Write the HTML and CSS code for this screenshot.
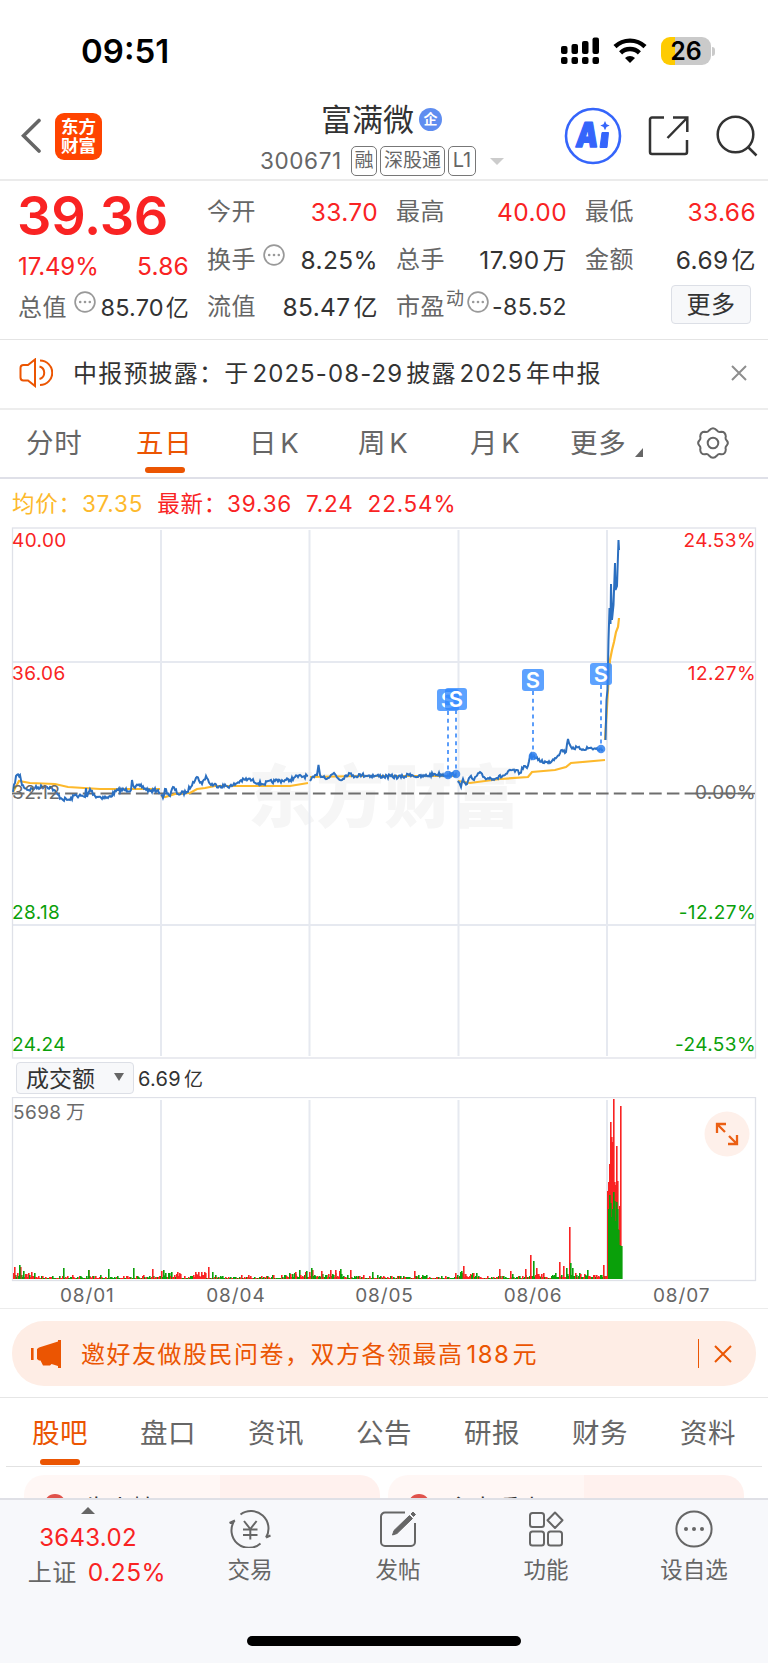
FILE: index.html
```html
<!DOCTYPE html>
<html lang="zh-CN">
<head>
    <meta charset="UTF-8">
    <meta name="viewport" content="width=device-width, initial-scale=1.0">
    <title>富满微 300671</title>
    <link rel="stylesheet" href="styles.css">
</head>
<body>

<div class="statusbar">
    <span class="clock">09:51</span>
    <div class="status-icons">
        <svg class="signal" width="39" height="28" viewBox="0 0 39 28">
            <rect x="0" y="9" width="6.500" height="8" rx="2"/>
            <rect x="10.500" y="7" width="6.500" height="10" rx="2"/>
            <rect x="21" y="4" width="6.500" height="13" rx="2"/>
            <rect x="31.500" y="0.500" width="6.500" height="16.500" rx="2"/>
            <rect x="0" y="20" width="6.500" height="7" rx="2"/>
            <rect x="10.500" y="20" width="6.500" height="7" rx="2"/>
            <rect x="21" y="20" width="6.500" height="7" rx="2"/>
            <rect x="31.500" y="20" width="6.500" height="7" rx="2"/>
        </svg>
        <svg class="wifi" width="34" height="26" viewBox="0 0 34 26">
            <path d="M2 8.700a21.500 21.500 0 0 1 30 0" fill="none" stroke="#000" stroke-width="4.400"/>
            <path d="M7.600 14.800a13.500 13.500 0 0 1 18.800 0" fill="none" stroke="#000" stroke-width="4.400"/>
            <path d="M17 25l-5-5a7.200 7.200 0 0 1 10 0z"/>
        </svg>
        <div class="battery"><span>26</span></div>
        <div class="battery-tip"></div>
    </div>
</div>

<header class="header">
    <div class="header-left">
        <svg width="20" height="36" viewBox="0 0 20 36"><path d="M18 2.500L2.500 17.800L18 33" fill="none" stroke="#666" stroke-width="3.600" stroke-linecap="round"/></svg>
        <div class="logo">东方<br>财富</div>
    </div>
    <div class="header-title">
        <div class="name">富满微<span class="corp">企</span></div>
        <div class="code"><span class="num">300671</span><i>融</i><i class="wide">深股通</i><i>L1</i><b class="caret"></b></div>
    </div>
    <div class="header-right">
        <svg width="58" height="58" viewBox="0 0 58 58">
            <circle cx="29" cy="29" r="27" fill="none" stroke="#3565fb" stroke-width="2.600"/>
            <text class="ai" transform="translate(11 40) skewX(-6) scale(.82 1)">A</text>
            <path d="M38 25.500h6.500l-1.500 15h-7z" fill="#3565fb" stroke="#3565fb" stroke-linejoin="round"/>
            <path d="M41 14l1.500 3.200l3.200 1.300l-3.200 1.500l-1.500 3.200l-1.500-3.200l-3.200-1.500l3.200-1.300z" fill="#3565fb"/>
        </svg>
        <svg width="42" height="42" viewBox="0 0 42 42" fill="none" stroke="#333" stroke-width="2.500">
            <path d="M16 2.500H4a2 2 0 0 0-2 2V37a2 2 0 0 0 2 2H37a2 2 0 0 0 2-2V25M25 2.500H39.300V17M39 3L19.500 23"/>
        </svg>
        <svg width="42" height="42" viewBox="0 0 42 42" fill="none" stroke="#333" stroke-width="2.500">
            <circle cx="19.500" cy="19.500" r="17.800"/><path d="M32 32l8.500 8.500"/>
        </svg>
    </div>
</header>

<section class="quote">
    <div class="q-price">
        <div class="price">39.36</div>
        <div class="row red"><span>17.49%</span><span class="v">5.86</span></div>
        <div class="row"><label>总值</label><svg class="dots" viewBox="0 0 22 22"><use href="#dots"/></svg><span class="v">85.70<em>亿</em></span></div>
    </div>
    <div class="q-col c2">
        <div class="row"><label>今开</label><span class="v red">33.70</span></div>
        <div class="row"><label>换手</label><svg class="dots" viewBox="0 0 22 22"><use href="#dots"/></svg><span class="v">8.25%</span></div>
        <div class="row"><label>流值</label><span class="v">85.47<em>亿</em></span></div>
    </div>
    <div class="q-col c3">
        <div class="row"><label>最高</label><span class="v red">40.00</span></div>
        <div class="row"><label>总手</label><span class="v">17.90<em>万</em></span></div>
        <div class="row"><label>市盈<sup>动</sup></label><svg class="dots tight" viewBox="0 0 22 22"><use href="#dots"/></svg><span class="v small">-85.52</span></div>
    </div>
    <div class="q-col c4">
        <div class="row"><label>最低</label><span class="v red">33.66</span></div>
        <div class="row"><label>金额</label><span class="v">6.69<em>亿</em></span></div>
        <div class="row"><button class="more">更多</button></div>
    </div>
</section>

<section class="notice">
    <svg width="34" height="30" viewBox="0 0 34 30" fill="none" stroke="#eb5502" stroke-width="2">
        <path d="M16 1.500V28L9 22.500H4.500a3 3 0 0 1-3-3V10a3 3 0 0 1 3-3H9z"/>
        <path d="M20.500 8.500a6.500 6.500 0 0 1 0 12.500M21 2.500a12 12 0 0 1 0 24.500"/>
    </svg>
    <p>中报预披露：<span class="gap">于</span><span class="num">2025-08-29</span>披露<span class="num">2025</span>年中报</p>
    <svg class="close" width="16" height="16" viewBox="0 0 16 16"><path d="M1 1l14 14M15 1L1 15" stroke="#8e8e8e" stroke-width="2"/></svg>
</section>

<nav class="periods">
    <a>分时</a>
    <a class="on">五日</a>
    <a>日<span>K</span></a>
    <a>周<span>K</span></a>
    <a>月<span>K</span></a>
    <a class="drop">更多</a>
    <svg width="32" height="32" viewBox="0 0 32 32" fill="none" stroke="#666" stroke-width="2">
        <path d="M12 3.500Q16 -1 20 3.500Q21.500 5.500 24 4.700Q28.500 4.500 28.800 9.500Q28 12 29.700 13.500Q32 16 29.700 18.500Q28 20 28.800 22.500Q28.500 27.500 24 27.300Q21.500 26.500 20 28.500Q16 33 12 28.500Q10.500 26.500 8 27.300Q3.500 27.500 3.200 22.500Q4 20 2.300 18.500Q0 16 2.300 13.500Q4 12 3.200 9.500Q3.500 4.500 8 4.700Q10.500 5.500 12 3.500Z"/>
        <circle cx="16" cy="16" r="5.300"/>
    </svg>
</nav>

<div class="legend">
    <span class="avg">均价：37.35</span>
    <span class="last">最新：39.36</span>
    <span>7.24</span>
    <span>22.54%</span>
</div>

<svg class="price-chart" width="768" height="532" viewBox="0 527 768 532">
    <text class="watermark" x="248" y="822">东方财富</text>
    <g class="grid">
        <path d="M161 530V1056M309.500 530V1056M458.500 530V1056M607 530V1056M12 662H755M12 925H755"/>
        <rect class="frame" x="12.500" y="528" width="743" height="530"/>
    </g>
    <path d="M12 793.500H755" stroke="#6e6e6e" stroke-width="2.200" stroke-dasharray="12.500 5.200"/>
    <path d="M695 793.500H755" stroke="#6e6e6e" stroke-width="1.600"/>
    <g id="lines"></g>
    <g id="marks"></g>
    <g class="axis">
        <text class="up" x="12" y="547">40.00</text>
        <text class="up" x="12" y="680">36.06</text>
        <text x="12" y="799">32.12</text>
        <text class="down" x="12" y="919">28.18</text>
        <text class="down" x="12" y="1051">24.24</text>
        <g text-anchor="end">
            <text class="up" x="756" y="547">24.53%</text>
            <text class="up" x="756" y="680">12.27%</text>
            <text x="756" y="799">0.00%</text>
            <text class="down" x="756" y="919">-12.27%</text>
            <text class="down" x="756" y="1051">-24.53%</text>
        </g>
    </g>
</svg>

<div class="indicator">
    <div class="select">成交额<b></b></div>
    <span class="num">6.69<em>亿</em></span>
</div>

<div class="volume">
    <svg width="768" height="185" viewBox="0 1097 768 185">
        <g class="grid">
            <path d="M161 1100V1279M309.500 1100V1279M458.500 1100V1279M607 1100V1279"/>
            <rect class="frame" x="12.500" y="1097.500" width="743" height="183"/>
        </g>
        <g id="bars"></g>
        <g class="axis"><text x="13" y="1119">5698</text><text x="66" y="1119">万</text></g>
        <circle cx="727" cy="1134" r="22.500" fill="#fef0ea"/>
        <path d="M725 1132l-7.500-7.500M717 1133v-9h9M729 1136l8 8M728 1144h9v-9" fill="none" stroke="#eb5f14" stroke-width="2.300"/>
    </svg>
    <div class="dates"><span>08/01</span><span>08/04</span><span>08/05</span><span>08/06</span><span>08/07</span></div>
</div>

<div class="banner-wrap">
    <div class="banner">
        <svg width="32" height="28" viewBox="0 0 32 28" fill="#eb5502">
            <rect x="0" y="8" width="2.600" height="12"/>
            <path d="M6 9l2-1.500L27 1.500V0h3v28h-3v-2L20.500 24l-1.500 1.500h-7L9.500 20.500H8L6 19z"/>
        </svg>
        <p>邀好友做股民问卷，双方各领最高<span class="num">188</span>元</p>
        <i></i>
        <svg width="18" height="18" viewBox="0 0 18 18"><path d="M1 1l16 16M17 1L1 17" stroke="#eb5502" stroke-width="2"/></svg>
    </div>
</div>

<nav class="subtabs">
    <a class="on">股吧</a><a>盘口</a><a>资讯</a><a>公告</a><a>研报</a><a>财务</a><a>资料</a>
</nav>

<section class="feed">
    <div class="card"><b></b><span>牛人榜</span></div>
    <div class="card"><b></b><span>主力看点</span></div>
</section>

<footer class="tabbar">
    <div class="index">
        <b></b>
        <strong>3643.02</strong>
        <p>上证<span>0.25%</span></p>
    </div>
    <div class="tab">
        <svg width="42" height="38" viewBox="0 0 42 38" fill="none" stroke="#666" stroke-width="2">
            <path d="M11.500 4.500A17.500 17.500 0 0 1 37 27.500M31.500 33.500A17.500 17.500 0 0 1 5.500 10.500M0.500 13l5.500-2.500M41.500 25.500L37 27.500"/>
            <path d="M15 11l6.300 8l6.300-8M21.300 19v10.500M14 19.500h14.500M14 25h14.500"/>
        </svg>
        交易
    </div>
    <div class="tab">
        <svg width="38" height="38" viewBox="0 0 38 38" fill="none" stroke="#666" stroke-width="2">
            <path d="M26 2.500H6a4 4 0 0 0-4 4V32a4 4 0 0 0 4 4H32a4 4 0 0 0 4-4V13"/>
            <path d="M30.500 5.500l3 3L18 23.500l-4.500 1.500l1.500-4.500zM32 4l2-2l2.500 2.500l-2 2z" fill="#666" stroke-width="1"/>
        </svg>
        发帖
    </div>
    <div class="tab">
        <svg width="36" height="38" viewBox="0 0 36 38" fill="none" stroke="#666" stroke-width="2">
            <rect x="2" y="3" width="14" height="14" rx="2.500"/>
            <rect x="2" y="21.500" width="14" height="14" rx="2.500"/>
            <rect x="20" y="21.500" width="14" height="14" rx="2.500"/>
            <path d="M27 2.500l7.500 7.800L27 18l-7.500-7.700z" stroke-linejoin="round"/>
        </svg>
        功能
    </div>
    <div class="tab">
        <svg width="38" height="38" viewBox="0 0 38 38">
            <circle cx="19" cy="19" r="17.600" fill="none" stroke="#666" stroke-width="2"/>
            <circle cx="11" cy="19" r="2" fill="#666"/><circle cx="19" cy="19" r="2" fill="#666"/><circle cx="27" cy="19" r="2" fill="#666"/>
        </svg>
        设自选
    </div>
    <div class="home"></div>
</footer>

<svg width="0" height="0" class="defs">
    <g id="dots">
        <circle cx="11" cy="11" r="9.900" fill="none" stroke="#999" stroke-width="1.700"/>
        <circle cx="6.200" cy="11" r="1.300" fill="#999"/><circle cx="11" cy="11" r="1.300" fill="#999"/><circle cx="15.800" cy="11" r="1.300" fill="#999"/>
    </g>
</svg>

<script src="chart.js"></script>
</body>
</html>
```
FILE: styles.css
```css
* {
    box-sizing: border-box;
}
body {
    margin: 0;
    width: 768px;
    height: 1663px;
    overflow: hidden;
    display: flex;
    flex-direction: column;
    background: #fff;
    color: #333;
    font-family: Inter, "Noto Sans CJK SC", sans-serif;
    font-size: 24px;
}
p {
    margin: 0;
}
i, em {
    font-style: normal;
}
.red {
    color: #f92323;
}
.defs {
    position: absolute;
}

/* status bar */
.statusbar {
    height: 92px;
    flex: none;
    display: flex;
    justify-content: space-between;
    padding: 31px 53px 0 81px;
}
.clock {
    font-size: 33px;
    line-height: 40px;
    font-weight: 600;
    color: #000;
}
.status-icons {
    display: flex;
    align-items: flex-start;
    padding-top: 6px;
}
.wifi {
    margin: 1px 0 0 13px;
}
.battery {
    margin-left: 14px;
    width: 50px;
    height: 28px;
    border-radius: 9px;
    background: linear-gradient(90deg, #fecb02 14px, #cacaca 14px);
    color: #000;
    font-weight: 600;
    font-size: 25px;
    line-height: 28px;
    text-align: center;
}
.battery-tip {
    width: 3px;
    height: 9px;
    margin: 10px 0 0 1px;
    border-radius: 0 4px 4px 0;
    background: #cacaca;
}

/* header */
.header {
    height: 89px;
    flex: none;
    display: grid;
    grid-template-columns: 250px 260px 1fr;
    border-bottom: 2px solid #ebebeb;
}
.header-left {
    display: flex;
    align-items: center;
    padding: 1px 0 0 21px;
}
.logo {
    width: 47px;
    height: 47px;
    margin-left: 14px;
    border-radius: 9px;
    background: #ff4400;
    color: #fff;
    font-weight: 700;
    font-size: 17.500px;
    line-height: 19px;
    padding-top: 4px;
    text-align: center;
}
.header-title {
    display: flex;
    flex-direction: column;
}
.name {
    display: flex;
    align-items: center;
    height: 56px;
    padding-left: 71px;
    font-size: 31px;
    line-height: 54px;
}
.corp {
    width: 23px;
    height: 23px;
    margin: -2px 0 0 5px;
    border-radius: 50%;
    background: #5f8df0;
    color: #fff;
    font-size: 14px;
    line-height: 22px;
    font-weight: 700;
    text-align: center;
}
.code {
    display: flex;
    align-items: center;
    margin-top: -2px;
    padding-left: 10px;
    color: #666;
    font-size: 22.500px;
    line-height: 30px;
}
.code .num {
    width: 91px;
    letter-spacing: .6px;
}
.code i {
    height: 30px;
    width: 26px;
    margin-right: 3px;
    border: 1px solid #777;
    border-radius: 5px;
    font-size: 19px;
    line-height: 27px;
    text-align: center;
    flex: none;
}
.code i:nth-of-type(3) {
    width: 28px;
    font-size: 20px;
}
.code .wide {
    width: 65px;
}
.caret {
    margin-left: 11px;
    border: 7px solid transparent;
    border-top-color: #ccc;
    border-bottom: 0;
}
.header-right {
    display: flex;
    align-items: center;
    padding: 1px 0 0 54px;
}
.header-right svg + svg {
    margin-left: 26px;
}
.ai {
    font-size: 34px;
    font-weight: 900;
    fill: #3565fb;
    stroke: #3565fb;
    stroke-width: 1.500;
    stroke-linejoin: round;
}

/* quote */
.quote {
    height: 159px;
    flex: none;
    display: grid;
    grid-template-columns: 170px 170px 170px 170px;
    column-gap: 19px;
    padding: 7px 12px 0 18px;
    border-bottom: 1px solid #e4e4e4;
}
.row {
    display: flex;
    height: 47.500px;
    line-height: 48px;
}
.row label {
    color: #666;
    letter-spacing: .5px;
    white-space: nowrap;
}
.row .v {
    margin-left: auto;
    margin-right: -1px;
    white-space: nowrap;
    font-size: 24.500px;
    letter-spacing: .4px;
}
.row em {
    margin-left: 3px;
    font-size: 24px;
}
.row sup {
    font-size: 18px;
    line-height: 0;
    vertical-align: 10px;
    margin-left: 1px;
}
.price {
    height: 54px;
    font-size: 54px;
    line-height: 55px;
    font-weight: 600;
    letter-spacing: -.2px;
    margin-left: -1px;
    color: #f92323;
}
.q-price .row {
    height: 41px;
    line-height: 49px;
    font-size: 24px;
}
.q-price .row + .row {
    line-height: 50px;
}
.q-price .row span {
    font-size: 24px;
    letter-spacing: -.1px;
}
.q-price .row .v {
    font-size: 23.500px;
    letter-spacing: .2px;
}
.q-price .red .v {
    font-size: 24.500px;
}
.q-price .row .v em {
    margin-left: 2px;
    font-size: 23px;
}
.dots {
    width: 22px;
    height: 22px;
    margin: 8px 0 0 7px;
    flex: none;
}
.dots.tight {
    margin-left: 2px;
}
.row .small {
    font-size: 23px;
}
.more {
    margin: 2px 4px 0 auto;
    width: 80px;
    height: 39px;
    border: 1px solid #dcdfe6;
    border-radius: 4px;
    background: #f7f8fa;
    color: #333;
    font: inherit;
    line-height: 36px;
    letter-spacing: .5px;
    padding: 0;
}

/* notice */
.notice {
    height: 70px;
    flex: none;
    display: flex;
    align-items: center;
    padding: 0 21px 2px 19px;
    border-bottom: 2px solid #ededed;
}
.notice p {
    margin: -3px 0 0 20px;
    letter-spacing: 1.200px;
}
.notice .num {
    margin: 0 3px;
    letter-spacing: 1.100px;
}
.notice .close {
    margin-left: auto;
}

/* chart period tabs */
.periods {
    height: 69px;
    flex: none;
    display: flex;
    align-items: center;
    padding: 0 0 2px 26px;
    border-bottom: 2px solid #dfe0e8;
    font-size: 27.500px;
    color: #666;
}
.periods a {
    width: 110px;
    line-height: 67px;
    height: 65px;
    letter-spacing: .7px;
}
.periods a span {
    margin-left: 3px;
}
.periods a:nth-child(3) {
    padding-left: 3px;
}
.periods a:nth-child(4) {
    padding-left: 2px;
}
.periods a:nth-child(5) {
    padding-left: 4px;
}
.periods .on, .subtabs .on {
    color: #eb5502;
    position: relative;
}
.periods .on::after, .subtabs .on::after {
    content: "";
    position: absolute;
    left: 9px;
    bottom: 2px;
    width: 40px;
    height: 6px;
    border-radius: 3px;
    background: #eb5502;
}
.periods .drop::after {
    content: "";
    display: inline-block;
    margin-left: 9px;
    border-left: 8px solid transparent;
    border-bottom: 9px solid #666;
    vertical-align: -4px;
}
.periods .drop {
    width: 127px;
    margin-left: -6px;
}

.legend {
    height: 48px;
    flex: none;
    display: flex;
    gap: 14px;
    padding-left: 12px;
    font-size: 22.500px;
    line-height: 49px;
    letter-spacing: .8px;
    color: #f92323;
}
.legend .avg {
    color: #fdb92c;
}

/* charts */
.price-chart {
    display: block;
    flex: none;
}
.grid path {
    stroke: #e6e9f0;
    stroke-width: 2;
    fill: none;
}
.grid .frame {
    fill: none;
    stroke: #dfe1e8;
    stroke-width: 1.300;
}
.watermark {
    font-size: 68px;
    font-weight: 900;
    fill: #f6f6f6;
}
.axis text {
    font-size: 19px;
    letter-spacing: .4px;
    fill: #6a6a6a;
}
.axis .up {
    fill: #f92323;
}
.axis .down {
    fill: #0aa00a;
}
.mark-s {
    font-size: 22px;
    font-weight: 600;
    fill: #fff;
    text-anchor: middle;
}
.indicator {
    height: 38px;
    flex: none;
    display: flex;
    align-items: center;
    padding-left: 16px;
}
.select {
    width: 118px;
    height: 32px;
    display: flex;
    align-items: center;
    padding: 0 0 2px 9px;
    border: 1px solid #dcdfe6;
    border-radius: 4px;
    background: #f7f8fa;
    font-size: 23px;
}
.select b {
    margin-left: 19px;
    border: 5px solid transparent;
    border-top: 8px solid #666;
    border-bottom: 0;
}
.indicator .num {
    margin: -1px 0 0 4px;
    font-size: 20px;
    letter-spacing: .3px;
}
.indicator em {
    margin-left: 3px;
    font-size: 19px;
}
.volume {
    height: 212px;
    flex: none;
    border-bottom: 1px solid #ececec;
}
.volume > svg {
    display: block;
}
.dates {
    display: grid;
    grid-template-columns: repeat(5, 148.600px);
    padding-left: 13px;
    font-size: 19px;
    line-height: 28px;
    letter-spacing: .9px;
    color: #666;
    text-align: center;
}

/* invite banner */
.banner-wrap {
    height: 89px;
    flex: none;
    padding: 12px 12px 0;
    border-bottom: 1px solid #e6e6e6;
}
.banner {
    height: 65px;
    display: flex;
    align-items: center;
    padding: 0 24px 0 19px;
    border-radius: 32px;
    background: #feede5;
    color: #eb5502;
}
.banner p {
    margin: -2px 0 0 18px;
    font-size: 24px;
    letter-spacing: 1.500px;
}
.banner .num {
    margin: 0 2px 0 3px;
}
.banner i {
    width: 1.500px;
    height: 29px;
    margin: 0 15px 0 auto;
    background: #eb5502;
}

/* forum tabs */
.subtabs {
    height: 69px;
    flex: none;
    display: grid;
    grid-template-columns: repeat(7, 1fr);
    margin: 0 6px;
    border-bottom: 1px solid #e2e2e2;
    font-size: 27.500px;
    line-height: 71px;
    letter-spacing: .5px;
    color: #666;
    text-align: center;
}
.subtabs .on::after {
    left: 34px;
    bottom: 4px;
}
.feed {
    flex: 1;
    min-height: 0;
    overflow: hidden;
    display: grid;
    grid-template-columns: 356px 356px;
    gap: 8px;
    padding: 8px 24px 0;
}
.card {
    height: 90px;
    display: flex;
    align-items: flex-start;
    padding: 19px 0 0 20px;
    border-radius: 20px;
    background: linear-gradient(90deg, #fff7f5 55%, #fff1ee 55%);
}
.card b {
    width: 22px;
    height: 22px;
    border-radius: 50%;
    background: #e0524b;
}
.card span {
    margin-left: 18px;
    font-size: 24px;
    line-height: 30px;
}

/* bottom bar */
.tabbar {
    height: 165px;
    flex: none;
    display: grid;
    grid-template-columns: 176px repeat(4, 148px);
    border-top: 2px solid #dfe0e6;
    background: #f7f8fb;
    color: #666;
    position: relative;
}
.index {
    display: flex;
    flex-direction: column;
    align-items: center;
    padding-top: 7px;
}
.index b {
    border: 7px solid transparent;
    border-bottom-color: #666;
    border-top: 0;
}
.index strong {
    font-weight: 400;
    color: #f92323;
    margin-top: 8px;
    line-height: 32px;
    letter-spacing: .3px;
}
.index p {
    padding-left: 18px;
    line-height: 36px;
    letter-spacing: .5px;
}
.index p span {
    margin-left: 11px;
    font-size: 24.500px;
    color: #f92323;
}
.tab {
    display: flex;
    flex-direction: column;
    align-items: center;
    padding-top: 10px;
    font-size: 22.500px;
    line-height: 38px;
}
.tab svg {
    margin-bottom: 3px;
}
.home {
    position: absolute;
    left: 247px;
    bottom: 17px;
    width: 274px;
    height: 10px;
    border-radius: 5px;
    background: #000;
}
```
FILE: chart.js
```js
const NS = 'http://www.w3.org/2000/svg';

// five trading days, [x, y] points of the price line
const price = [
    [[13,792],[16,776],[20,775],[22,785],[28,790],[35,788],[45,786],[52,788],[56,793],[62,799],[70,800],[75,795],[85,797],[86,788],[87,797],[90,789],[95,796],[108,798],[118,790],[131,790],[132,780],[134,787],[140,786],[150,791],[158,790],[160,793]],
    [[161,796],[163,798],[165,789],[170,796],[173,787],[178,794],[187,792],[193,782],[197,777],[202,784],[206,776],[210,784],[220,786],[232,786],[240,781],[248,779],[262,784],[275,781],[290,780],[295,777],[308,776]],
    [[310,781],[317,775],[318.5,765],[320,775],[328,778],[334,773],[340,780],[349,773],[352,776],[362,775],[375,776],[403,777],[410,774],[418,777],[425,776],[435,774],[448,775],[456,774]],
    [[457.5,782],[461,787],[463,779],[467,784],[470,777],[474,780],[479,773],[485,778],[497,778],[505,775],[512,770],[520,773],[524,766],[527,768],[530,756],[533,756],[538,760],[548,763],[555,758],[562,750],[566,752],[568,739],[571,747],[580,749],[590,748],[603,750]],
    [[605.5,740],[606.5,700],[607.5,690],[608.5,640],[609.5,608],[610.5,624],[611,584],[612,620],[613.5,605],[615,563],[615.5,590],[617,586],[618.5,540],[619,550]]
];
const average = [
    [[13,792],[19,781],[30,783],[55,784],[68,787],[100,789],[160,789]],
    [[161,796],[165,797],[175,794],[190,793],[197,789],[205,788],[215,786],[290,786],[308,783]],
    [[310,777],[360,776],[457,776]],
    [[458,781],[470,783],[500,779],[528,777],[532,772],[555,770],[566,767],[571,763],[605,760]],
    [[605,740],[608,690],[610,660],[612,650],[614,642],[616,632],[618,627],[619,618]]
];
const marks = [[448,775,689],[456,774,688],[533,756,669],[601,749,663]];

// turnover peaks: [x, height], everything else is background trading
const redPeaks = [[14,12],[20,12],[72,4],[88,9],[152,10],[195,7],[198,7],[208,12],[248,4],[295,7],[321,8],[330,9],[335,9],[350,9],[414,8],[463,13],[499,10],[510,8],[525,10],[530,24],[536,11],[559,17],[563,13],[569,52],[603,14],[607,88],[608,97],[609,115],[610,157],[611,142],[612,137],[613,180],[614,97],[615,94],[616,133],[617,98],[618,50],[619,73],[620,173]];
const greenPeaks = [[19,14],[23,8],[63,11],[88,9],[108,10],[133,11],[163,9],[212,7],[311,11],[340,10],[372,7],[461,8],[512,5],[533,18],[566,11],[570,16],[572,11],[608,70],[609,84],[610,76],[611,62],[612,70],[613,87],[614,78],[615,58],[616,77],[617,70],[618,49],[619,34],[620,33],[621,33]];

let seed = 7;
function rnd() {
    seed = (seed * 16807) % 2147483647;
    return seed / 2147483647;
}

function add(parent, tag, attrs, text) {
    const el = document.createElementNS(NS, tag);
    for (const k in attrs) el.setAttribute(k, attrs[k]);
    if (text) el.textContent = text;
    document.getElementById(parent).appendChild(el);
}

// adds small ticks between the points
function jitter(points) {
    const out = [];
    for (let i = 0; i < points.length - 1; i++) {
        const [x1, y1] = points[i], [x2, y2] = points[i + 1];
        out.push([x1, y1]);
        for (let x = x1 + 1; x < x2 - 0.5; x += 1) {
            const y = y1 + (y2 - y1) * (x - x1) / (x2 - x1);
            out.push([x, y + (rnd() - 0.5) * 4]);
        }
    }
    out.push(points[points.length - 1]);
    return out;
}

average.forEach(d => add('lines', 'polyline', { points: d.join(' '), fill: 'none', stroke: '#fdb92c', 'stroke-width': 2.2 }));
price.forEach(d => add('lines', 'polyline', { points: jitter(d).join(' '), fill: 'none', stroke: '#2b6fc0', 'stroke-width': 2 }));

marks.forEach(([x, y, my]) => {
    add('marks', 'path', { d: `M${x} ${my + 22}V${y}`, stroke: '#4a93fa', 'stroke-width': 1.8, 'stroke-dasharray': '4 3.8' });
    add('marks', 'circle', { cx: x, cy: y, r: 4.3, fill: '#2f80ed', opacity: 0.85 });
    add('marks', 'rect', { x: x - 11, y: my, width: 22, height: 22, rx: 3, fill: '#2f88ff', opacity: 0.78 });
    add('marks', 'text', { x: x, y: my + 18.5, class: 'mark-s' }, 'S');
});

function bar(x, h, color) {
    add('bars', 'rect', { x: x, y: 1279 - h, width: 1.6, height: h, fill: color });
}
// busier stretches around each open and close
const busy = [[13,35],[155,180],[190,205],[285,345],[455,480],[525,545],[555,606]];
for (let x = 13; x < 621; x++) {
    const b = busy.some(([a, z]) => x >= a && x <= z);
    const h = 1 + Math.floor(rnd() * rnd() * (b ? 8 : 4)) + (b ? 1 : 0);
    bar(x, h, rnd() > 0.5 ? '#f92323' : '#0aa00a');
}
redPeaks.forEach(([x, h]) => bar(x, h, '#f92323'));
greenPeaks.forEach(([x, h]) => bar(x, h, '#0aa00a'));
```
